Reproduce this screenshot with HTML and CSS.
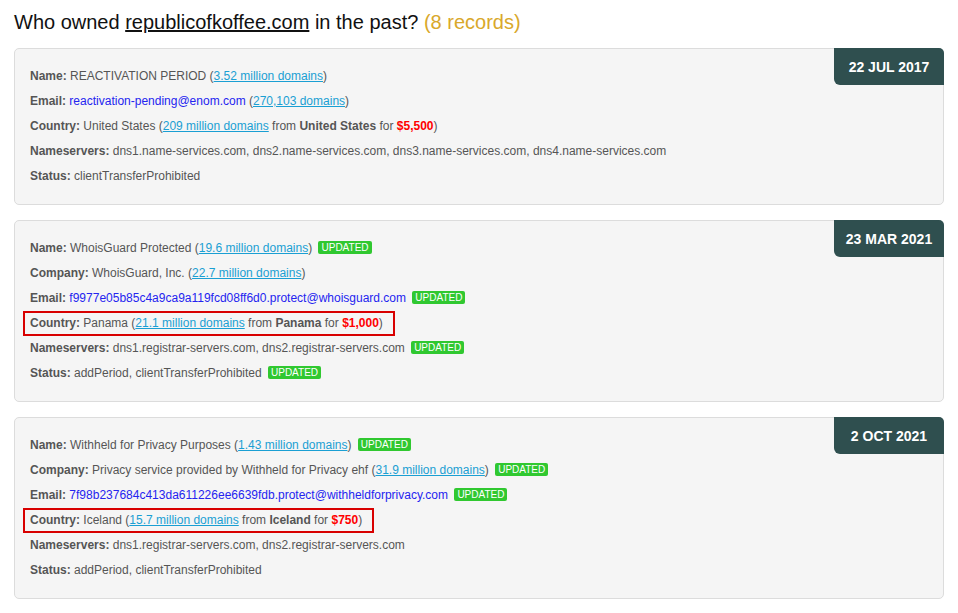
FILE: index.html
```html
<!DOCTYPE html>
<html>
<head>
<meta charset="utf-8">
<link rel="stylesheet" href="styles.css">
</head>
<body>
<h1 class="title">Who owned <a class="domain" href="#">republicofkoffee.com</a> in the past? <span class="count">(8 records)</span></h1>

<div class="card">
  <div class="date">22 JUL 2017</div>
  <div class="row"><b>Name:</b> REACTIVATION PERIOD (<a class="lnk" href="#">3.52 million domains</a>)</div>
  <div class="row"><b>Email:</b> <span class="mail">reactivation-pending@enom.com</span> (<a class="lnk" href="#">270,103 domains</a>)</div>
  <div class="row"><b>Country:</b> United States (<a class="lnk" href="#">209 million domains</a> from <b>United States</b> for <span class="price">$5,500</span>)</div>
  <div class="row"><b>Nameservers:</b> dns1.name-services.com, dns2.name-services.com, dns3.name-services.com, dns4.name-services.com</div>
  <div class="row"><b>Status:</b> clientTransferProhibited</div>
</div>

<div class="card">
  <div class="date">23 MAR 2021</div>
  <div class="row"><b>Name:</b> WhoisGuard Protected (<a class="lnk" href="#">19.6 million domains</a>) <span class="upd">UPDATED</span></div>
  <div class="row"><b>Company:</b> WhoisGuard, Inc. (<a class="lnk" href="#">22.7 million domains</a>)</div>
  <div class="row"><b>Email:</b> <span class="mail">f9977e05b85c4a9ca9a119fcd08ff6d0.protect@whoisguard.com</span> <span class="upd">UPDATED</span></div>
  <div class="row"><span class="hl"><b>Country:</b> Panama (<a class="lnk" href="#">21.1 million domains</a> from <b>Panama</b> for <span class="price">$1,000</span>)</span></div>
  <div class="row"><b>Nameservers:</b> dns1.registrar-servers.com, dns2.registrar-servers.com <span class="upd">UPDATED</span></div>
  <div class="row"><b>Status:</b> addPeriod, clientTransferProhibited <span class="upd">UPDATED</span></div>
</div>

<div class="card">
  <div class="date">2 OCT 2021</div>
  <div class="row"><b>Name:</b> Withheld for Privacy Purposes (<a class="lnk" href="#">1.43 million domains</a>) <span class="upd">UPDATED</span></div>
  <div class="row"><b>Company:</b> Privacy service provided by Withheld for Privacy ehf (<a class="lnk" href="#">31.9 million domains</a>) <span class="upd">UPDATED</span></div>
  <div class="row"><b>Email:</b> <span class="mail">7f98b237684c413da611226ee6639fdb.protect@withheldforprivacy.com</span> <span class="upd">UPDATED</span></div>
  <div class="row"><span class="hl"><b>Country:</b> Iceland (<a class="lnk" href="#">15.7 million domains</a> from <b>Iceland</b> for <span class="price">$750</span>)</span></div>
  <div class="row"><b>Nameservers:</b> dns1.registrar-servers.com, dns2.registrar-servers.com</div>
  <div class="row"><b>Status:</b> addPeriod, clientTransferProhibited</div>
</div>
</body>
</html>
```

FILE: styles.css
```css
html, body {
  margin: 0;
  padding: 0;
  background: #fff;
}
body {
  padding: 9px 14px 0 14px;
  font-family: "Liberation Sans", Arial, sans-serif;
}
.title {
  margin: 0 0 13px 0;
  font-size: 20px;
  font-weight: normal;
  line-height: 26px;
  color: #111;
}
.domain {
  color: #111;
  text-decoration: underline;
}
.count {
  color: #d9a82b;
}
.card {
  position: relative;
  width: 930px;
  box-sizing: border-box;
  background: #f5f5f5;
  border: 1px solid #dcdcdc;
  border-radius: 5px;
  padding: 15px 15px 15px 15px;
  margin-bottom: 15px;
  font-size: 12px;
  color: #555;
}
.date {
  position: absolute;
  top: -1px;
  right: -1px;
  width: 110px;
  height: 37px;
  line-height: 38px;
  text-align: center;
  background: #2f4f4f;
  color: #fff;
  font-weight: bold;
  font-size: 14px;
  border-radius: 0 5px 0 6px;
}
.row {
  line-height: 25px;
  height: 25px;
}
.row b {
  color: #555;
}
.lnk {
  color: #1a9fd3;
  text-decoration: underline;
}
.mail {
  color: #2424f0;
}
.price {
  color: #f00;
  font-weight: bold;
}
.upd {
  display: inline-block;
  background: #30c830;
  color: #fff;
  font-size: 10px;
  line-height: 13px;
  padding: 0 3px;
  margin-left: 3px;
  border-radius: 2px;
  vertical-align: 1px;
}
.hl {
  display: inline-block;
  border: 2px solid #d80000;
  line-height: 21px;
  padding: 0 10px 0 5px;
  margin-left: -7px;
  vertical-align: top;
}
```
